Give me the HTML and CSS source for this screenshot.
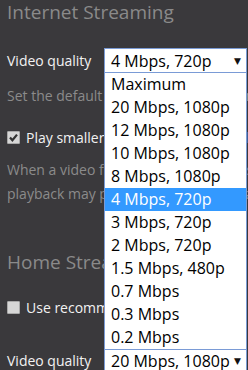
FILE: index.html
```html
<!DOCTYPE html>
<html lang="en">
<head>
  <meta charset="UTF-8">
  <title>Settings - Video quality</title>
  <link rel="stylesheet" href="styles.css">
</head>
<body>
  <div class="page">
    <h2 class="section-title">Internet Streaming</h2>

    <div class="field">
      <label class="field-label">Video quality</label>
      <div class="select">
        <span class="select-value">4 Mbps, 720p</span>
        <span class="select-arrow">&#9660;</span>
      </div>
    </div>
    <p class="hint">Set the default video quality for internet streaming.</p>

    <div class="check-row">
      <span class="checkbox checked">
        <svg viewBox="0 0 13 13" width="13" height="13"><path d="M3 6.5 L5.4 9.2 L10 3.6" fill="none" stroke="#333" stroke-width="2.2"/></svg>
      </span>
      <span class="check-label">Play smaller videos in original quality</span>
    </div>
    <p class="hint desc">When a video file is smaller than the selected quality,<br>playback may play the original file instead.</p>

    <h2 class="section-title home">Home Streaming</h2>

    <div class="check-row home-check">
      <span class="checkbox"></span>
      <span class="check-label">Use recommended settings</span>
    </div>

    <div class="field last">
      <label class="field-label">Video quality</label>
      <div class="select">
        <span class="select-value">20 Mbps, 1080p</span>
        <span class="select-arrow">&#9660;</span>
      </div>
    </div>

    <!-- open list of the first select -->
    <ul class="dropdown">
      <li>Maximum</li>
      <li>20 Mbps, 1080p</li>
      <li>12 Mbps, 1080p</li>
      <li>10 Mbps, 1080p</li>
      <li>8 Mbps, 1080p</li>
      <li class="selected">4 Mbps, 720p</li>
      <li>3 Mbps, 720p</li>
      <li>2 Mbps, 720p</li>
      <li>1.5 Mbps, 480p</li>
      <li>0.7 Mbps</li>
      <li>0.3 Mbps</li>
      <li>0.2 Mbps</li>
    </ul>
  </div>
</body>
</html>
```
FILE: styles.css
```css
body, html {
  margin: 0;
  padding: 0;
  height: 100%;
  overflow: hidden;
}
body {
  background: #3a393c;
  font-family: "Open Sans", "DejaVu Sans", sans-serif;
  color: #f2f2f2;
}
.page {
  position: relative;
  width: 241px;
  height: 370px;
  padding-left: 7px;
  overflow: hidden;
  white-space: nowrap;
}
.section-title {
  margin: 0;
  font-size: 19px;
  font-weight: 400;
  line-height: 24px;
  color: #8a8a8a;
}
.section-title.home {
  margin-top: 44px;
}
.field {
  display: flex;
  align-items: center;
  margin-top: 24px;
  height: 25px;
}
.field.last {
  margin-top: 29px;
}
.field-label {
  width: 97px;
  font-size: 14px;
}
.select {
  flex: 1;
  display: flex;
  align-items: center;
  justify-content: space-between;
  height: 23px;
  margin-right: 1px;
  padding: 0 5px 0 6px;
  background: #fff;
  border: 1px solid #7a9bd6;
  color: #000;
  font-size: 16px;
}
.select-arrow {
  font-size: 9px;
  color: #111;
}
.hint {
  margin: 11px 0 0;
  font-size: 14px;
  line-height: 24px;
  color: #8b8b8b;
}
.hint.desc {
  margin-top: 9px;
}
.check-row {
  display: flex;
  align-items: center;
  gap: 6px;
  margin-top: 17px;
  height: 24px;
  font-size: 14px;
}
.check-row.home-check {
  margin-top: 21px;
}
.checkbox {
  display: flex;
  width: 11px;
  height: 11px;
  background: #d6d6d6;
  border: 1px solid #a9a9a9;
  border-radius: 1px;
}
.checkbox svg {
  margin: -1px;
}
.dropdown {
  position: absolute;
  left: 104px;
  top: 73px;
  width: 141px;
  margin: 0;
  padding: 0;
  list-style: none;
  background: #fff;
  border: 1px solid #7a9bd6;
  border-top: none;
  color: #000;
  font-size: 16px;
}
.dropdown li {
  height: 23px;
  line-height: 23px;
  padding-left: 6px;
}
.dropdown li.selected {
  background: #3399ff;
  color: #fff;
}
```
